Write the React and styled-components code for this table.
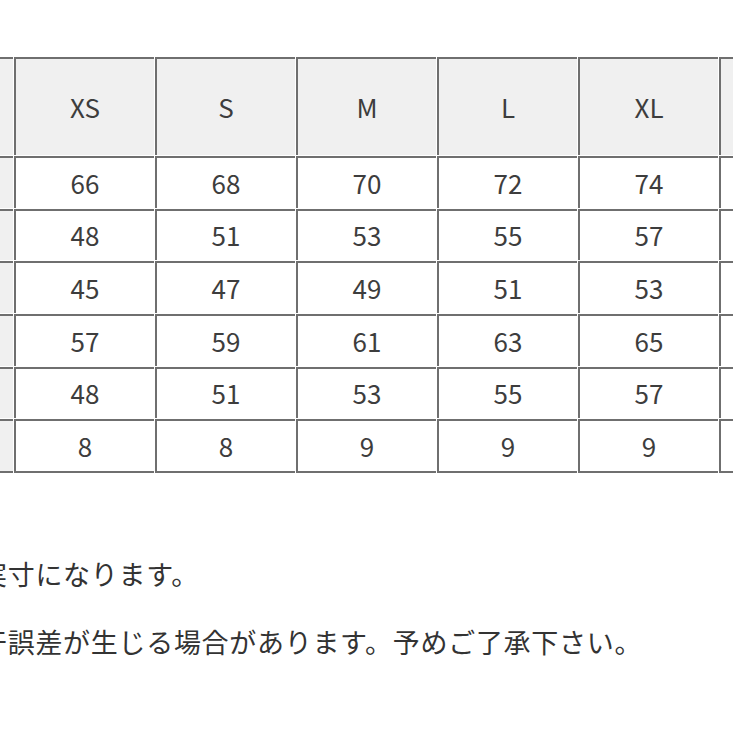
import React from 'react';
import styled, { createGlobalStyle } from 'styled-components';

const sizes = ['XS', 'S', 'M', 'L', 'XL'];

const rows = [
  [66, 68, 70, 72, 74],
  [48, 51, 53, 55, 57],
  [45, 47, 49, 51, 53],
  [57, 59, 61, 63, 65],
  [48, 51, 53, 55, 57],
  [8, 8, 9, 9, 9],
];

const GlobalStyle = createGlobalStyle`
  html, body {
    margin: 0;
    padding: 0;
    background: #fff;
    overflow: hidden;
  }
  body {
    font-family: "Noto Sans CJK JP", "Noto Sans", sans-serif;
    color: #333;
  }
`;

const Page = styled.div`
  width: 733px;
  height: 733px;
  overflow: hidden;
  padding-top: 56px;
  box-sizing: border-box;
`;

const SizeTable = styled.table`
  width: 988px;
  min-width: 988px;
  margin-left: -128px;
  border-collapse: separate;
  border-spacing: 1px;
  table-layout: fixed;
`;

const Cell = styled.td`
  width: 140px;
  box-sizing: border-box;
  height: ${(p) => (p.$head ? '98px' : p.$last ? '54px' : '51.67px')};
  border-top: 2px solid #6f6f6f;
  border-left: 2px solid #6f6f6f;
  border-bottom: ${(p) => (p.$last ? '2px solid #6f6f6f' : 'none')};
  background: ${(p) => (p.$shade ? '#f0f0f0' : '#fff')};
  padding: 0;
  text-align: center;
  vertical-align: middle;
  font-size: 26px;
  font-weight: 400;
  color: #3d3d3d;
  line-height: 1;
`;

const Notes = styled.div`
  margin-top: 82px;
  display: flex;
  flex-direction: column;
  gap: 32px;
  margin-left: -20px;
`;

const Note = styled.p`
  margin: 0;
  font-size: 27px;
  line-height: 36px;
  letter-spacing: 0.7px;
  color: #333;
  white-space: nowrap;
`;

export default function App() {
  return (
    <>
      <GlobalStyle />
      <Page>
        <SizeTable>
          <tbody>
            <tr>
              <Cell $head $shade />
              {sizes.map((s) => (
                <Cell key={s} $head $shade>
                  {s}
                </Cell>
              ))}
              <Cell $head $shade />
            </tr>
            {rows.map((r, i) => (
              <tr key={i}>
                <Cell $shade $last={i === rows.length - 1} />
                {r.map((v, j) => (
                  <Cell key={j} $last={i === rows.length - 1}>
                    {v}
                  </Cell>
                ))}
                <Cell $last={i === rows.length - 1} />
              </tr>
            ))}
          </tbody>
        </SizeTable>
        <Notes>
          <Note>実寸になります。</Note>
          <Note>干誤差が生じる場合があります。予めご了承下さい。</Note>
        </Notes>
      </Page>
    </>
  );
}
